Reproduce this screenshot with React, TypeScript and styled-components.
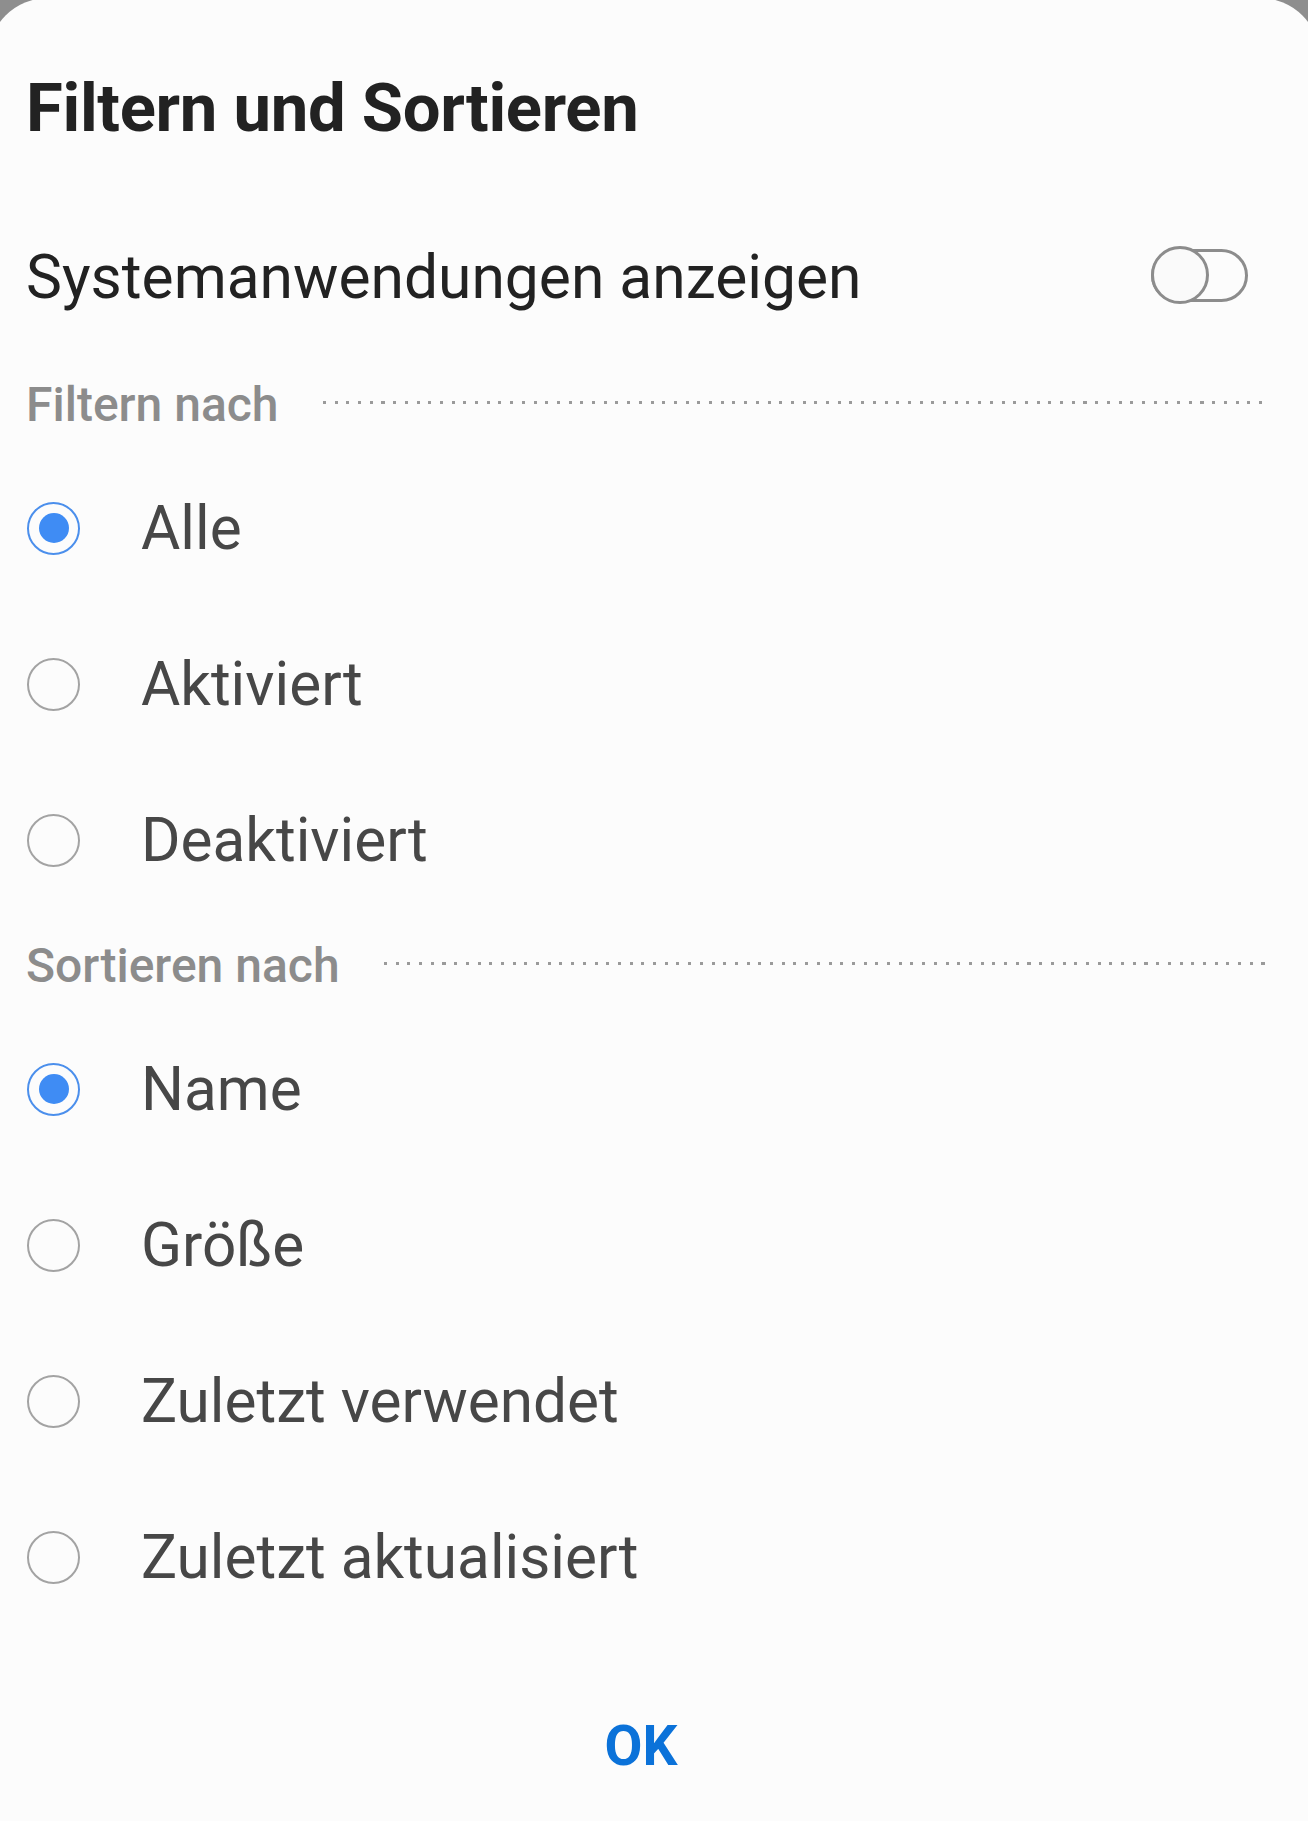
import React, { useState } from "react";
import styled, { createGlobalStyle } from "styled-components";

const Global = createGlobalStyle`
  html, body {
    margin: 0;
    padding: 0;
    overflow: hidden;
    background: #8e8e8e;
    font-family: Roboto, "Noto Sans", "Liberation Sans", sans-serif;
  }
  * { box-sizing: border-box; }
`;

const Dialog = styled.div`
  margin: -2px -12px 0 -12px;
  min-height: 1840px;
  background: #fcfcfc;
  border-radius: 60px 60px 0 0;
  padding: 70px 68px 0 38px;
  display: flex;
  flex-direction: column;
`;

const Title = styled.h1`
  margin: 0;
  height: 80px;
  line-height: 80px;
  font-size: 67px;
  font-weight: 700;
  color: #222222;
  letter-spacing: -0.3px;
`;

const SwitchRow = styled.div`
  margin-top: 79px;
  height: 100px;
  display: flex;
  align-items: center;
  justify-content: space-between;
  margin-bottom: 30px;
`;

const SwitchLabel = styled.span`
  font-size: 60.5px;
  font-weight: 400;
  color: #222222;
`;

const Toggle = styled.button`
  position: relative;
  width: 97px;
  height: 58px;
  margin-right: 4px;
  margin-top: -4px;
  padding: 0;
  border: none;
  background: transparent;
  display: flex;
  align-items: center;
  cursor: pointer;
`;

const Track = styled.span`
  display: block;
  width: 97px;
  height: 53px;
  border: 3px solid #8c8c8c;
  border-radius: 27px;
  background: #fcfcfc;
`;

const Knob = styled.span<{ $on: boolean }>`
  position: absolute;
  top: 0;
  left: ${(p) => (p.$on ? "39px" : "0")};
  width: 58px;
  height: 58px;
  border: 3px solid #8c8c8c;
  border-radius: 50%;
  background: #fafafa;
`;

const SectionHeader = styled.div`
  margin-top: 17px;
  margin-bottom: 16px;
  height: 60px;
  display: flex;
  align-items: center;
  gap: 44px;
`;

const SectionTitle = styled.span`
  font-size: 48px;
  font-weight: 500;
  color: #8c8c8c;
  white-space: nowrap;
`;

const Dots = styled.span`
  flex: 1;
  height: 3px;
  margin-top: -3px;
  margin-right: -14px;
  background-image: repeating-linear-gradient(
    to right,
    #9a9a9a 0 3px,
    transparent 3px 11.7px
  );
`;

const OptionRow = styled.label`
  height: 156px;
  display: flex;
  align-items: center;
  gap: 62px;
  cursor: pointer;
`;

const Radio = styled.span<{ $checked: boolean }>`
  position: relative;
  flex: none;
  width: 53px;
  height: 53px;
  margin-left: 1px;
  border-radius: 50%;
  border: 2.7px solid ${(p) => (p.$checked ? "#4b8fec" : "#a3a3a3")};
  background: #fcfcfc;
  display: flex;
  align-items: center;
  justify-content: center;
  &::after {
    content: "";
    display: ${(p) => (p.$checked ? "block" : "none")};
    width: 30px;
    height: 30px;
    border-radius: 50%;
    background: #3f8cf4;
  }
`;

const OptionLabel = styled.span`
  font-size: 60.3px;
  font-weight: 400;
  color: #474747;
  margin-left: -1px;
`;

const Footer = styled.div`
  margin-top: 61px;
  height: 100px;
  display: flex;
  align-items: center;
  justify-content: center;
`;

const OkButton = styled.button`
  border: none;
  background: transparent;
  padding: 0 20px;
  margin-left: 4px;
  font-family: inherit;
  font-size: 55px;
  font-weight: 700;
  color: #0b72d9;
  line-height: 100px;
  cursor: pointer;
`;

const filters = ["Alle", "Aktiviert", "Deaktiviert"];
const sorts = ["Name", "Größe", "Zuletzt verwendet", "Zuletzt aktualisiert"];

function Section({
  title,
  options,
  value,
  onChange,
}: {
  title: string;
  options: string[];
  value: string;
  onChange: (v: string) => void;
}) {
  return (
    <>
      <SectionHeader>
        <SectionTitle>{title}</SectionTitle>
        <Dots />
      </SectionHeader>
      {options.map((o) => (
        <OptionRow key={o} onClick={() => onChange(o)}>
          <Radio $checked={value === o} />
          <OptionLabel>{o}</OptionLabel>
        </OptionRow>
      ))}
    </>
  );
}

export default function App() {
  const [sys, setSys] = useState(false);
  const [filter, setFilter] = useState("Alle");
  const [sort, setSort] = useState("Name");
  return (
    <>
      <Global />
      <Dialog>
        <Title>Filtern und Sortieren</Title>
        <SwitchRow>
          <SwitchLabel>Systemanwendungen anzeigen</SwitchLabel>
          <Toggle onClick={() => setSys(!sys)} aria-pressed={sys}>
            <Track />
            <Knob $on={sys} />
          </Toggle>
        </SwitchRow>
        <Section title="Filtern nach" options={filters} value={filter} onChange={setFilter} />
        <Section title="Sortieren nach" options={sorts} value={sort} onChange={setSort} />
        <Footer>
          <OkButton>OK</OkButton>
        </Footer>
      </Dialog>
    </>
  );
}
